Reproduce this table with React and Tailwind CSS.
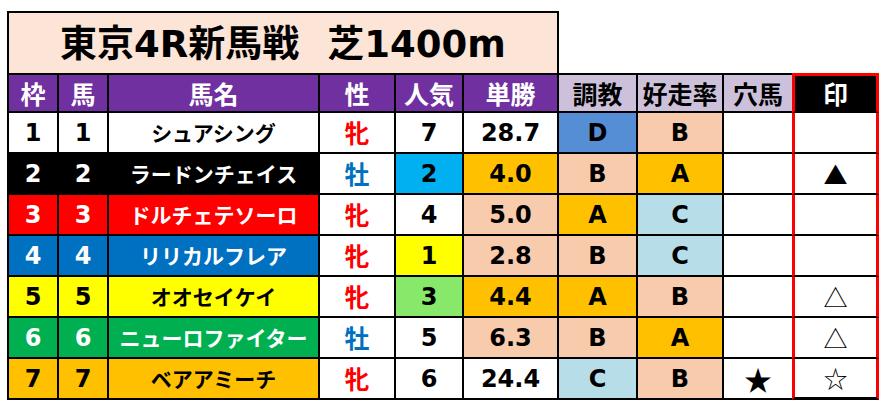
import React from 'react';

const COLS = [
  { w: 'w-[52px]', edge: 'border-l-2 border-r-2 border-black' },
  { w: 'w-[50px]', edge: 'border-r-2 border-black' },
  { w: 'w-[211px]', edge: 'border-r-2 border-black' },
  { w: 'w-[76px]', edge: 'border-r-2 border-black' },
  { w: 'w-[68px]', edge: 'border-r-2 border-black' },
  { w: 'w-[95px]', edge: 'border-r-2 border-black' },
  { w: 'w-[79px]', edge: 'border-r-2 border-black' },
  { w: 'w-[86px]', edge: 'border-r-2 border-black' },
  { w: 'w-[68px]', edge: '' },
  { w: 'w-[87px]', edge: 'border-x-[3px] border-x-[#ff0000]' },
];

const FRAME = {
  1: 'bg-white text-black',
  2: 'bg-black text-white',
  3: 'bg-[#ff0000] text-white',
  4: 'bg-[#0070c0] text-white',
  5: 'bg-[#ffff00] text-black',
  6: 'bg-[#00b050] text-white',
  7: 'bg-[#ffc000] text-black',
};

const FILL = {
  w: 'bg-white',
  o: 'bg-[#ffc000]',
  p: 'bg-[#f8cbad]',
  b: 'bg-[#b7dee8]',
  d: 'bg-[#558ed5]',
  c: 'bg-[#00b0f0]',
  y: 'bg-[#ffff00]',
  g: 'bg-[#88e86a]',
};

const HORSES = [
  { n: 1, name: 'シュアシング', sex: '牝', pop: 7, popBg: 'w', odds: '28.7', oddsBg: 'w', tr: 'D', trBg: 'd', rate: 'B', rateBg: 'p', ana: '', mark: '' },
  { n: 2, name: 'ラードンチェイス', sex: '牡', pop: 2, popBg: 'c', odds: '4.0', oddsBg: 'o', tr: 'B', trBg: 'p', rate: 'A', rateBg: 'o', ana: '', mark: '▲' },
  { n: 3, name: 'ドルチェテソーロ', sex: '牝', pop: 4, popBg: 'w', odds: '5.0', oddsBg: 'p', tr: 'A', trBg: 'o', rate: 'C', rateBg: 'b', ana: '', mark: '' },
  { n: 4, name: 'リリカルフレア', sex: '牝', pop: 1, popBg: 'y', odds: '2.8', oddsBg: 'p', tr: 'B', trBg: 'p', rate: 'C', rateBg: 'b', ana: '', mark: '' },
  { n: 5, name: 'オオセイケイ', sex: '牝', pop: 3, popBg: 'g', odds: '4.4', oddsBg: 'o', tr: 'A', trBg: 'o', rate: 'B', rateBg: 'p', ana: '', mark: '△' },
  { n: 6, name: 'ニューロファイター', sex: '牡', pop: 5, popBg: 'w', odds: '6.3', oddsBg: 'p', tr: 'B', trBg: 'p', rate: 'A', rateBg: 'o', ana: '', mark: '△' },
  { n: 7, name: 'ベアアミーチ', sex: '牝', pop: 6, popBg: 'w', odds: '24.4', oddsBg: 'w', tr: 'C', trBg: 'b', rate: 'B', rateBg: 'p', ana: '★', mark: '☆' },
];

const CJK = { fontFamily: '"Noto Sans CJK JP", sans-serif' };

function Cell({ i, className = '', style, children }) {
  const col = COLS[i];
  return (
    <div
      className={`${col.w} ${col.edge} border-b-2 border-b-black flex items-center justify-center ${className}`}
      style={style}
    >
      {children}
    </div>
  );
}

export default function App() {
  const headers = [
    { t: '枠', c: 'bg-[#7030a0] text-white' },
    { t: '馬', c: 'bg-[#7030a0] text-white' },
    { t: '馬名', c: 'bg-[#7030a0] text-white' },
    { t: '性', c: 'bg-[#7030a0] text-white' },
    { t: '人気', c: 'bg-[#7030a0] text-white' },
    { t: '単勝', c: 'bg-[#7030a0] text-white' },
    { t: '調教', c: 'bg-[#ccc0da] text-black' },
    { t: '好走率', c: 'bg-[#ccc0da] text-black' },
    { t: '穴馬', c: 'bg-[#ccc0da] text-black' },
    { t: '印', c: 'bg-black text-white' },
  ];

  return (
    <div
      className="w-[887px] h-[411px] bg-white pl-[7px] pt-[11px] font-bold"
      style={{ fontFamily: '"DejaVu Sans", "Noto Sans CJK JP", sans-serif' }}
    >
      <div className="w-[552px] h-[62px] bg-[#fce4d6] border-l-2 border-r-2 border-t-2 border-black flex items-center justify-center text-[37px] text-black leading-none pt-[2px]">
        <span>東京4R新馬戦</span>
        <span className="w-[28px]" />
        <span>芝1400m</span>
      </div>

      <div className="flex h-[40px] text-[25px] leading-none" style={CJK}>
        {headers.map((h, i) => (
          <Cell
            key={h.t}
            i={i}
            className={`${h.c} ${i === 9 ? 'border-t-[3px] border-t-[#ff0000]' : 'border-t-2 border-t-black'}`}
          >
            {h.t}
          </Cell>
        ))}
      </div>

      {HORSES.map((h, r) => (
        <div key={h.n} className="flex h-[41px] text-[24px] leading-none text-black">
          <Cell i={0} className={FRAME[h.n]}>{h.n}</Cell>
          <Cell i={1} className={FRAME[h.n]}>{h.n}</Cell>
          <Cell i={2} className={`${FRAME[h.n]} text-[21px]`} style={CJK}>{h.name}</Cell>
          <Cell
            i={3}
            className={`bg-white text-[25px] ${h.sex === '牝' ? 'text-[#ff0000]' : 'text-[#0070c0]'}`}
            style={CJK}
          >
            {h.sex}
          </Cell>
          <Cell i={4} className={FILL[h.popBg]}>{h.pop}</Cell>
          <Cell i={5} className={FILL[h.oddsBg]}>{h.odds}</Cell>
          <Cell i={6} className={FILL[h.trBg]}>{h.tr}</Cell>
          <Cell i={7} className={FILL[h.rateBg]}>{h.rate}</Cell>
          <Cell i={8} className="bg-white text-[28px] font-normal" style={CJK}>{h.ana}</Cell>
          <Cell
            i={9}
            className={`bg-white font-normal text-[24px] ${r === HORSES.length - 1 ? 'border-b-[3px] border-b-[#ff0000]' : ''}`}
            style={CJK}
          >
            {h.mark}
          </Cell>
        </div>
      ))}
    </div>
  );
}
